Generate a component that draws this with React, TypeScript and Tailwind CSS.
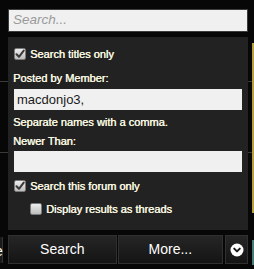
import React from "react";

function Box({ checked }: { checked: boolean }) {
  return (
    <div className="w-[12px] h-[12px] shrink-0 rounded-[2px] border border-[#7a7a7a] bg-gradient-to-b from-[#eeeeee] to-[#bdbdbd] flex items-center justify-center">
      {checked && (
        <svg width="10" height="10" viewBox="0 0 10 10">
          <path d="M1.5 5.2 L4 7.8 L8.7 1.6" fill="none" stroke="#3a3a3a" strokeWidth="2" strokeLinecap="round" strokeLinejoin="round" />
        </svg>
      )}
    </div>
  );
}

const txt = "text-[11px] leading-[13px] text-[#f8f8e0] [text-shadow:0.4px_0_0_#f8f8e0]";

export default function App() {
  return (
    <div className="relative w-[254px] h-[269px] bg-[#070707] overflow-hidden [font-family:'Liberation_Sans',Arial,sans-serif]">
      {/* background fragments */}
      <div className="absolute left-0 top-[81px] w-[8px] h-px bg-[#3a3a3a]" />
      <div className="absolute right-0 top-[81px] w-[6px] h-px bg-[#3a3a3a]" />
      <div className="absolute left-0 top-[152px] w-[8px] h-px bg-[#3a3a3a]" />
      <div className="absolute right-0 top-[152px] w-[6px] h-px bg-[#3a3a3a]" />
      <div className="absolute right-0 top-[43px] w-[2px] h-[170px] bg-[#b8a040]" />
      <div className="absolute right-0 top-[240px] w-[2px] h-[25px] bg-[#4a7a78]" />
      <div className="absolute left-0 top-[237px] w-[3px] h-[26px] bg-[#1a1a1a] border-r border-[#333]" />
      <div className="absolute left-[-5px] top-[241px] text-[14px] text-white">e</div>

      <div className="relative flex flex-col pl-[8px] pt-[9px] w-[248px]">
        <div className="h-[23px] bg-[#f0f0f0] border border-[#3c3c3c] flex items-center pl-[4px]">
          <span className="text-[13.5px] italic text-[#9a9a9a]">Search...</span>
        </div>

        <div className="mt-[5px] bg-[#222222] h-[193px] flex flex-col px-[6px] pt-[10px]">
          <div className="flex items-center gap-[4px] h-[13px]">
            <Box checked />
            <span className={txt + " pt-[2px]"}>Search titles only</span>
          </div>

          <div className={txt + " mt-[12px] -ml-[1px]"}>Posted by Member:</div>

          <div className="mt-[4px] h-[21px] bg-[#f0f0f0] flex items-center pl-[3px]">
            <span className="text-[13px] text-[#1a1a1a]">macdonjo3,</span>
          </div>

          <div className={txt + " mt-[6px] -ml-[1px]"}>Separate names with a comma.</div>
          <div className={txt + " mt-[6px] -ml-[1px]"}>Newer Than:</div>

          <div className="mt-[3px] h-[21px] bg-[#f0f0f0]" />

          <div className="flex items-center gap-[4px] h-[13px] mt-[7px]">
            <Box checked />
            <span className={txt + " pt-[2px]"}>Search this forum only</span>
          </div>

          <div className="flex items-center gap-[4px] h-[13px] mt-[10px] pl-[16px]">
            <Box checked={false} />
            <span className={txt + " pt-[2px]"}>Display results as threads</span>
          </div>
        </div>

        <div className="mt-[5px] flex h-[29px] gap-[1px]">
          <div className="w-[109px] border border-[#303030] bg-gradient-to-b from-[#262626] to-[#141414] flex items-center justify-center text-[14px] text-white">
            Search
          </div>
          <div className="w-[106px] border border-[#303030] bg-gradient-to-b from-[#262626] to-[#141414] flex items-center justify-center text-[14px] text-white">
            More...
          </div>
          <div className="ml-[1px] w-[23px] border border-[#303030] bg-gradient-to-b from-[#262626] to-[#141414] flex items-center justify-center">
            <svg width="14" height="14" viewBox="0 0 14 14">
              <circle cx="7" cy="7" r="6.5" fill="#ffffff" />
              <path d="M4.2 5.6 L7 8.4 L9.8 5.6" fill="none" stroke="#1a1a1a" strokeWidth="2" strokeLinecap="round" strokeLinejoin="round" />
            </svg>
          </div>
        </div>
      </div>
    </div>
  );
}
